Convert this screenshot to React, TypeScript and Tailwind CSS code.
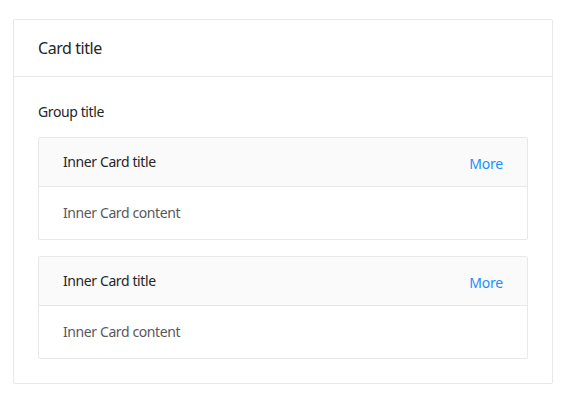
export default function App() {
  const inner = (
    <div className="rounded-[2px] border border-[#e8e8e8] bg-white">
      <div className="flex h-[49px] items-center justify-between border-b border-[#e8e8e8] bg-[#fafafa] px-6">
        <span className="text-[14px] leading-[22px] tracking-[-0.4px] text-[#262626]">Inner Card title</span>
        <span className="mt-[4px] text-[14px] leading-[22px] tracking-[-0.2px] text-[#1890ff]">More</span>
      </div>
      <div className="flex h-[52px] items-center px-6 text-[14px] leading-[22px] tracking-[-0.4px] text-[#595959]">
        Inner Card content
      </div>
    </div>
  );
  return (
    <div className="min-h-[394px] bg-white pl-[13px] pt-[19px]" style={{ fontFamily: '"Segoe UI", "Noto Sans", sans-serif' }}>
      <div className="w-[540px] rounded-[2px] border border-[#e8e8e8] bg-white">
        <div className="flex h-[57px] items-center border-b border-[#e8e8e8] px-6 text-[16px] leading-[24px] tracking-[-0.45px] text-[#262626]">
          Card title
        </div>
        <div className="p-6">
          <div className="mb-[14px] h-[22px] text-[14px] leading-[22px] tracking-[-0.4px] text-[#262626]">Group title</div>
          {inner}
          <div className="mt-4">{inner}</div>
        </div>
      </div>
    </div>
  );
}
